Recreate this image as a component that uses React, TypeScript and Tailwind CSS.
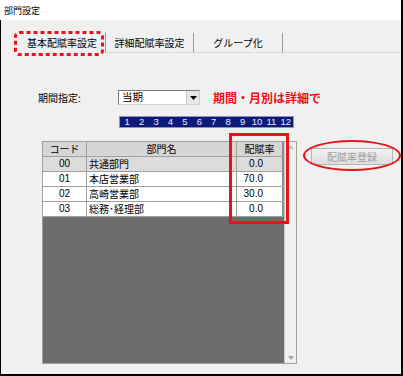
import React from "react"

const font = { fontFamily: '"Noto Sans CJK JP", "Liberation Sans", sans-serif' }

const rows = [
  { code: "00", name: "共通部門", rate: "0.0", fixed: true },
  { code: "01", name: "本店営業部", rate: "70.0" },
  { code: "02", name: "高崎営業部", rate: "30.0" },
  { code: "03", name: "総務･経理部", rate: "0.0" },
]

const months = [1, 2, 3, 4, 5, 6, 7, 8, 9, 10, 11, 12]

export default function App() {
  return (
    <div className="relative flex h-[376px] w-[403px] flex-col overflow-hidden bg-white text-black" style={font}>
      {/* title bar */}
      <div className="flex h-[20px] items-center border-r-2 border-black pl-[4px] text-[9px] leading-none">部門設定</div>

      {/* window body */}
      <div className="flex flex-1 flex-col border-b-2 border-l border-r-2 border-black bg-[#f0f0f0]">
        {/* tabs */}
        <div className="mt-[13px] flex h-[20px] items-stretch">
          <div className="w-[16px] shrink-0" />
          <div className="flex w-[89px] items-center justify-center border-r border-[#9a9a9a] pl-[2px] text-[10px] leading-none">
            基本配賦率設定
          </div>
          <div className="flex w-[88px] items-center justify-center border-b border-r border-[#9a9a9a] border-b-[#dadada] text-[10px] leading-none">
            詳細配賦率設定
          </div>
          <div className="flex w-[89px] items-center justify-center border-b border-r border-[#9a9a9a] border-b-[#dadada] text-[10px] leading-none">
            グループ化
          </div>
          <div className="flex-1 border-b border-[#dadada]" />
        </div>

        {/* tab content */}
        <div className="flex flex-col pl-[37px]">
          {/* period selector */}
          <div className="mt-[37px] flex h-[15px] items-center">
            <div className="w-[80px] text-[10px] leading-none">期間指定:</div>
            <div className="flex h-[15px] w-[82px] border border-[#7a7a7a] border-b-[#d0d0d0] border-r-[#d0d0d0] bg-white">
              <div className="flex flex-1 items-center pl-[3px] text-[10.5px] leading-none">当期</div>
              <div className="flex w-[13px] items-center justify-center border-l border-[#c8c8c8] bg-[#e8e8e8]">
                <svg width="7" height="4" viewBox="0 0 7 4">
                  <path d="M0 0H7L3.5 4Z" fill="#000" />
                </svg>
              </div>
            </div>
            <div className="ml-[13px] text-[12px] font-bold leading-none text-[#ee1111]">期間・月別は詳細で</div>
          </div>

          {/* month strip */}
          <div className="ml-[81px] mt-[11px] flex h-[12px] w-[175px] items-center border border-[#8a93b8] bg-[#0e1a7a]">
            {months.map((m) => (
              <div
                key={m}
                className="flex flex-1 items-center justify-center text-[9.5px] leading-none text-[#e8ecff]"
                style={{ fontFamily: '"Liberation Sans", sans-serif' }}
              >
                {m}
              </div>
            ))}
          </div>

          {/* grid + button */}
          <div className="mt-[13px] flex items-start">
            <div className="ml-[4px] flex h-[223px] w-[255px] border border-[#a0a0a0] bg-[#6d6d6d]">
              <div className="flex w-[241px] flex-col">
                <div className="flex h-[15px] border-b border-[#a0a0a0] bg-[#d6d6d6] text-[10px] leading-none">
                  <div className="flex w-[44px] items-center justify-center border-r border-[#a0a0a0]">コード</div>
                  <div className="flex w-[150px] items-center justify-center border-r border-[#a0a0a0]">部門名</div>
                  <div className="flex w-[47px] items-center justify-center border-r-2 border-[#8c8c8c]">配賦率</div>
                </div>
                {rows.map((r) => (
                  <div
                    key={r.code}
                    className={
                      "flex h-[15px] border-b border-[#a0a0a0] text-[10px] leading-none " +
                      (r.fixed ? "bg-[#dcdcdc]" : "bg-white")
                    }
                  >
                    <div
                      className="flex w-[44px] items-center justify-center border-r border-[#a0a0a0]"
                      style={{ fontFamily: '"Liberation Sans", sans-serif' }}
                    >
                      {r.code}
                    </div>
                    <div className="flex w-[150px] items-center border-r border-[#a0a0a0] pl-[2px]">{r.name}</div>
                    <div
                      className="flex w-[47px] items-center justify-end border-r-2 border-[#8c8c8c] pr-[19px]"
                      style={{ fontFamily: '"Liberation Sans", sans-serif' }}
                    >
                      {r.rate}
                    </div>
                  </div>
                ))}
              </div>
              {/* scrollbar */}
              <div className="flex flex-1 flex-col items-center justify-between border-l border-[#c8c8c8] bg-[#f0f0f0] py-[3px]">
                <svg width="6" height="4" viewBox="0 0 6 4">
                  <path d="M0 4H6L3 0Z" fill="#c4c4c4" />
                </svg>
                <svg width="6" height="4" viewBox="0 0 6 4">
                  <path d="M0 0H6L3 4Z" fill="#a8a8a8" />
                </svg>
              </div>
            </div>
            <button className="ml-[14px] mt-[7px] flex h-[17px] w-[82px] items-center justify-center border border-[#b4b4b4] bg-gradient-to-b from-[#f2f2f2] to-[#dedede] text-[10px] leading-none text-[#a0a0a0]">
              配賦率登録
            </button>
          </div>
        </div>
      </div>

      {/* annotations */}
      <svg className="pointer-events-none absolute left-[14px] top-[31px]" width="90" height="25" viewBox="0 0 90 25">
        <rect x="1.5" y="1.5" width="87" height="22" rx="4" fill="none" stroke="#e8141c" strokeWidth="3" strokeDasharray="4 3" />
      </svg>
      <div className="pointer-events-none absolute left-[229px] top-[133px] h-[91px] w-[60px] border-[3px] border-[#e8141c]" />
      <div className="pointer-events-none absolute left-[303px] top-[140px] h-[31px] w-[98px] rounded-[50%] border-[2.5px] border-[#e8141c]" />
    </div>
  )
}
